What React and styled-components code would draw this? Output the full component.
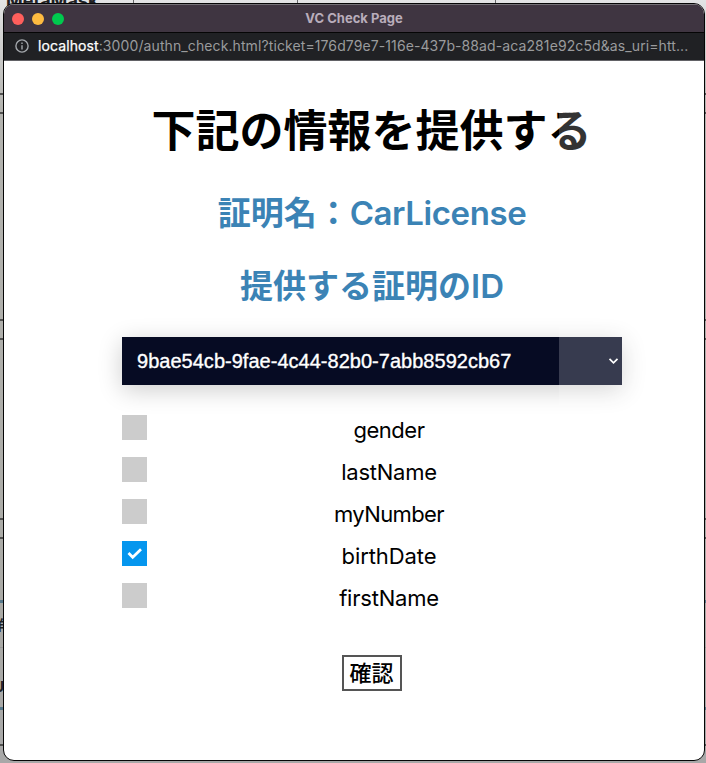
import React from "react";
import styled, { createGlobalStyle } from "styled-components";

const GlobalStyle = createGlobalStyle`
  * { box-sizing: border-box; }
  html, body { margin: 0; padding: 0; overflow: hidden; }
`;

const Desktop = styled.div`
  display: grid;
  grid-template: 763px / 706px;
  width: 706px;
  height: 763px;
  overflow: hidden;
  background: linear-gradient(to bottom, #e3e4e5 0, #d5d5d5 30px, #b3b3af 110px, #aaaaa6 600px, #a8a8a8 100%);
`;

const Backdrop = styled.div`
  grid-area: 1 / 1;
  display: flex;
  flex-direction: column;
  overflow: hidden;
  color: #202124;
  font: 700 14px/16px Inter, "Noto Sans CJK JP", sans-serif;
`;

const BackHeader = styled.div`
  display: grid;
  grid-template-columns: 134px 164px 198px 1fr;
  flex: 0 0 93px;
`;

const BackCell = styled.span`
  border-right: 1px solid #66676a;
  padding-left: 6px;
  font-size: 18px;
  line-height: 2px;

  &:last-child { border-right: 0; }
`;

const BackRow = styled.div`
  display: flex;
  align-items: ${(p) => p.$align || "center"};
  flex: 0 0 ${(p) => p.$h}px;
  padding-bottom: ${(p) => (p.$align ? 12 : 0)}px;
  border-top: ${(p) => p.$line || "2px solid #50504f"};
`;

const BackLabel = styled.span`
  display: flex;
  justify-content: flex-end;
  width: 4px;
`;

const Window = styled.main`
  grid-area: 1 / 1;
  z-index: 1;
  display: flex;
  flex-direction: column;
  width: 702px;
  height: 758px;
  margin: 3px 1px 2px 3px;
  border: 1px solid #050505;
  border-radius: 11px;
  overflow: hidden;
  background: #fff;
`;

const TitleBar = styled.header`
  display: grid;
  grid-template-columns: 60px 1fr 60px;
  align-items: center;
  flex: none;
  height: 29px;
  padding: 0 8px;
  background: #3f3541;
  border-top: 1px solid #747076;
  border-bottom: 1px solid #050505;
`;

const Lights = styled.div`
  display: flex;
  gap: 8px;
`;

const Light = styled.i`
  width: 12px;
  height: 12px;
  border-radius: 50%;
  background: ${(p) => p.$color};
`;

const Title = styled.span`
  padding-bottom: 2px;
  text-align: center;
  font: 700 13px/16px Inter, sans-serif;
  color: #b9adbb;
`;

const AddressBar = styled.div`
  display: flex;
  align-items: center;
  flex: none;
  height: 28px;
  padding: 0 11px 1px;
  gap: 9px;
  background: #202124;
  border-bottom: 1px solid #626266;
`;

const Url = styled.span`
  font: 400 14px/20px Inter, sans-serif;
  letter-spacing: 0.1px;
  color: #9a9b9d;
  white-space: nowrap;
`;

const Host = styled.span`
  color: #fff;
  -webkit-text-stroke: 0.25px #fff;
`;

const Page = styled.section`
  position: relative;
  flex: 1;
  padding: 35px 82px 0 118px;
  text-align: center;
  font-family: Inter, "Noto Sans CJK JP", sans-serif;
`;

const Heading = styled.h1`
  margin: 0 0 0 -1px;
  font: 700 44px/64px "Noto Sans CJK JP", sans-serif;
  color: #000;
`;

const SubHeading = styled.h2`
  margin: ${(p) => p.$gap}px 0 0;
  font: 600 33px/48px Inter, "Noto Sans CJK JP", sans-serif;
  letter-spacing: ${(p) => p.$track || 0}px;
  color: #3b83b5;
`;

const Cjk = styled.span`
  font-family: "Noto Sans CJK JP", sans-serif;
  font-weight: 700;
  letter-spacing: 0;
`;

const Select = styled.div`
  display: flex;
  align-items: center;
  justify-content: space-between;
  height: 48px;
  margin-top: 27px;
  padding: 0 3px 0 15px;
  background: #060b23;
  color: #fff;
  font: 400 20px/24px "Liberation Sans", Arial, sans-serif;
  letter-spacing: 0.02px;
  -webkit-text-stroke: 0.35px #fff;
  box-shadow: 0 5px 25px rgba(0, 0, 0, 0.2);
`;

const SelectShade = styled.div`
  position: absolute;
  inset: 0 0 0 555px;
  background: rgba(255, 255, 255, 0.2);
  pointer-events: none;
`;

const Options = styled.div`
  display: grid;
  row-gap: 17px;
  margin-top: 30px;
`;

const Option = styled.label`
  display: grid;
  grid-template-columns: 25px 1fr;
  column-gap: 10px;
  height: 25px;
  font-size: 22px;
  line-height: 30px;
  letter-spacing: ${(p) => p.$track}px;
  color: #000;
`;

const OptionName = styled.span`
  padding-right: 1px;
`;

const Box = styled.span`
  display: grid;
  place-items: center;
  width: 25px;
  height: 25px;
  background: ${(p) => (p.$checked ? "#0596ee" : "#ccc")};
`;

const Confirm = styled.button`
  display: inline-flex;
  justify-content: center;
  width: 60px;
  height: 36px;
  margin-top: 47px;
  padding: 0 1px 0 0;
  border: 2px solid #555;
  background: #fff;
  color: #000;
  font: 500 22px/29px "Noto Sans CJK JP", sans-serif;
`;

const options = [
  { name: "gender", track: -0.5 },
  { name: "lastName", track: -0.25 },
  { name: "myNumber", track: -0.6 },
  { name: "birthDate", track: -0.1, checked: true },
  { name: "firstName", track: -0.22 },
];

const blueLine = "3px solid #55788b";
const rows = [
  { h: 19 },
  { h: 207 },
  { h: 19 },
  { h: 180 },
  { h: 19 },
  { h: 63 },
  { h: 47, line: blueLine, label: "詳" },
  { h: 60, line: "1px solid #999", label: "U", align: "flex-end" },
  { h: 37, line: blueLine },
  { h: 19 },
];

export default function App() {
  return (
    <>
      <GlobalStyle />
      <Desktop>
        <Backdrop>
          <BackHeader>
            <BackCell>MetaMask</BackCell>
            <BackCell />
            <BackCell />
            <BackCell />
          </BackHeader>
          {rows.map((row, i) => (
            <BackRow key={i} $h={row.h} $line={row.line} $align={row.align}>
              {row.label && <BackLabel>{row.label}</BackLabel>}
            </BackRow>
          ))}
        </Backdrop>
        <Window>
          <TitleBar>
            <Lights>
              <Light $color="#ff5f5c" />
              <Light $color="#febb40" />
              <Light $color="#00ca4e" />
            </Lights>
            <Title>VC Check Page</Title>
          </TitleBar>
          <AddressBar>
            <svg width="14" height="14" viewBox="0 0 14 14" fill="none" stroke="#a3a7ac" strokeWidth="1.4">
              <circle cx="7" cy="7" r="6.1" />
              <path d="M7 6.2v4.2M7 3.5v1.5" />
            </svg>
            <Url><Host>localhost</Host>:3000/authn_check.html?ticket=176d79e7-116e-437b-88ad-aca281e92c5d&amp;as_uri=htt...</Url>
          </AddressBar>
          <Page>
            <Heading>下記の情報を提供する</Heading>
            <SubHeading $gap={27} $track={-0.4}><Cjk>証明名：</Cjk>CarLicense</SubHeading>
            <SubHeading $gap={23}><Cjk>提供する証明の</Cjk>ID</SubHeading>
            <Select>
              <span>9bae54cb-9fae-4c44-82b0-7abb8592cb67</span>
              <svg width="11" height="8" viewBox="0 0 11 8" fill="none" stroke="#fff" strokeWidth="1.7">
                <path d="M1.5 1.8l4 4 4-4" />
              </svg>
            </Select>
            <Options>
              {options.map((o) => (
                <Option key={o.name} $track={o.track}>
                  <Box $checked={o.checked}>
                    {o.checked && (
                      <svg width="17" height="13" viewBox="0 0 17 13" fill="none" stroke="#fff" strokeWidth="2.7">
                        <path d="M2.5 6l4.2 4.3L15 2.2" />
                      </svg>
                    )}
                  </Box>
                  <OptionName>{o.name}</OptionName>
                </Option>
              ))}
            </Options>
            <Confirm>確認</Confirm>
            <SelectShade />
          </Page>
        </Window>
      </Desktop>
    </>
  );
}
